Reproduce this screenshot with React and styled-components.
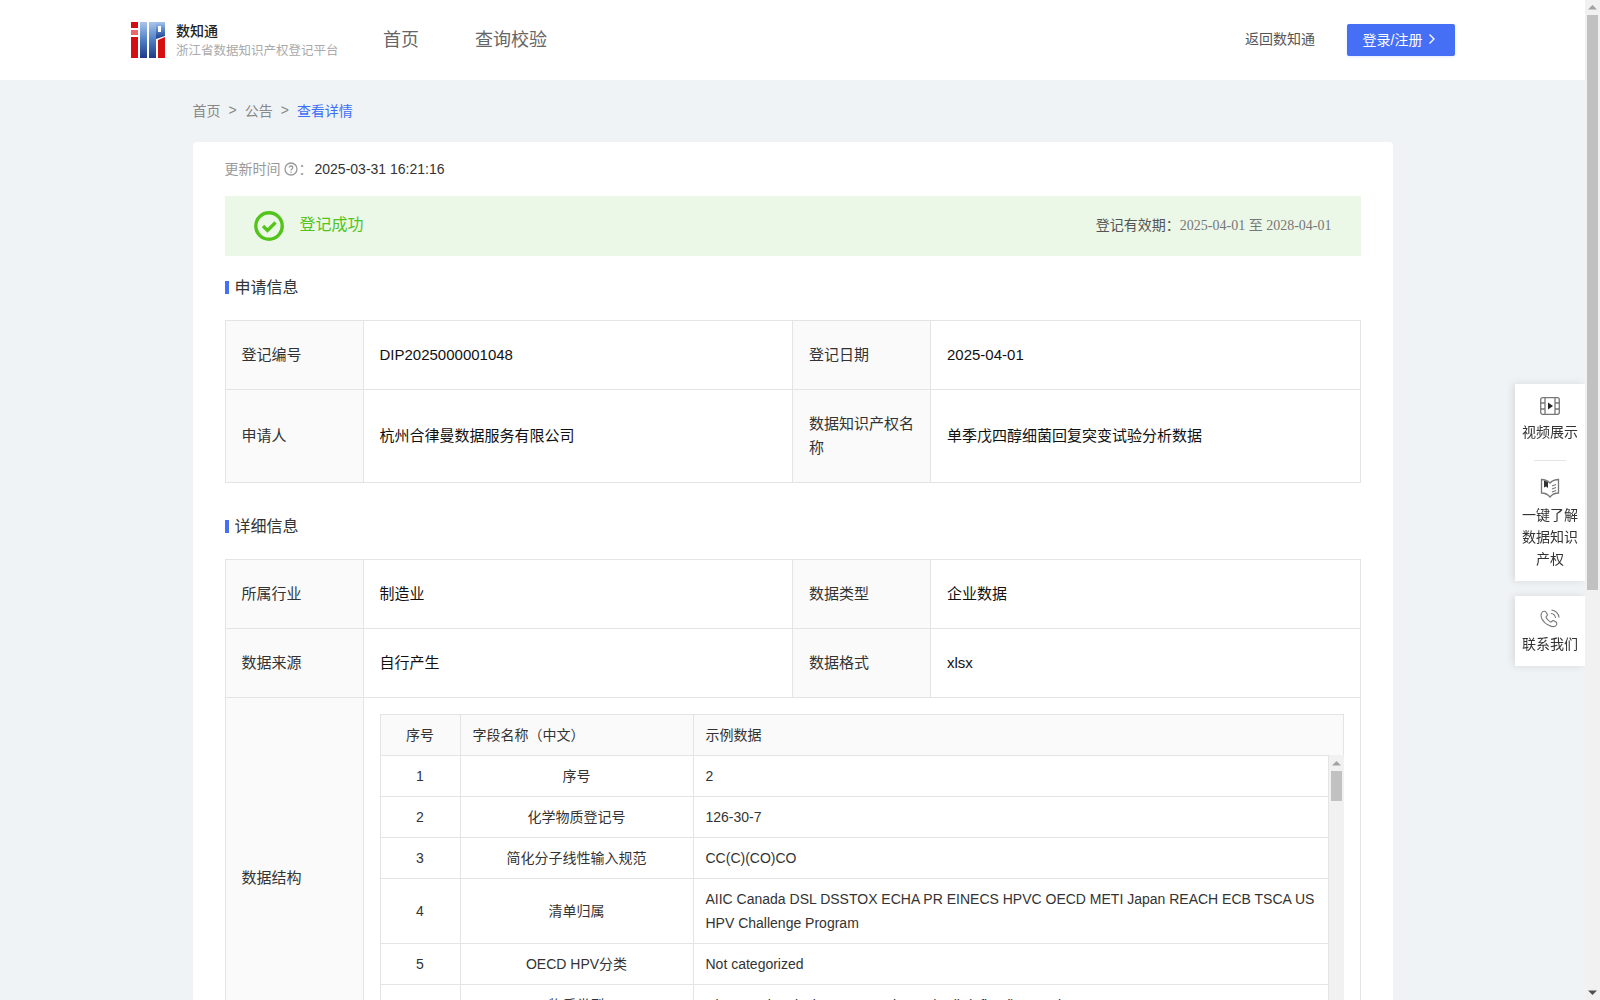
import React from 'react';
import styled, { createGlobalStyle } from 'styled-components';

const GlobalStyle = createGlobalStyle`
  html, body {
    margin: 0;
    padding: 0;
    background: #eff3f6;
    font-family: "Liberation Sans", "Noto Sans CJK SC", sans-serif;
    font-size: 14px;
    color: #333;
  }
  * { box-sizing: border-box; }
`;

const Page = styled.div`
  width: 1585px;
  min-height: 1687px;
`;

const Header = styled.header`
  height: 80px;
  background: #fff;
  display: flex;
  align-items: center;
  padding: 0 130px 0 131px;
`;

const Brand = styled.div`
  display: flex;
  align-items: center;
  gap: 11px;
  width: 252px;
`;

const BrandText = styled.div`
  display: flex;
  flex-direction: column;
  gap: 1px;
`;

const BrandName = styled.div`
  font-size: 14px;
  line-height: 20px;
  font-weight: 500;
  color: #222;
`;

const BrandSub = styled.div`
  font-size: 12.5px;
  line-height: 18px;
  color: #aaa;
  white-space: nowrap;
`;

const Nav = styled.nav`
  display: flex;
  gap: 56px;
  flex: 1;
  padding-bottom: 4px;
`;

const NavItem = styled.a`
  font-size: 18px;
  color: #666;
`;

const BackLink = styled.a`
  font-size: 14px;
  color: #555;
  margin-right: 32px;
  padding-bottom: 4px;
`;

const LoginButton = styled.button`
  width: 108px;
  height: 32px;
  border: 0;
  border-radius: 2px;
  background: #4570f6;
  color: #fff;
  font: inherit;
  font-size: 14px;
  display: flex;
  align-items: center;
  justify-content: center;
  gap: 6px;
  padding: 0 3px 3px 0;
  box-shadow: 0 1px 3px rgba(69, 112, 246, 0.15);
`;

const Main = styled.main`
  width: 1200px;
  margin: 0 auto;
`;

const Crumbs = styled.div`
  height: 62px;
  display: flex;
  align-items: center;
  gap: 8px;
  color: #888;
  font-size: 14px;
  padding-bottom: 3px;
`;

const CrumbCurrent = styled.span`
  color: #3b6ff5;
`;

const Card = styled.div`
  background: #fff;
  border-radius: 4px;
  padding: 16px 32px 32px;
`;

const UpdateRow = styled.div`
  display: flex;
  align-items: center;
  height: 22px;
  color: #999;
`;

const UpdateLabel = styled.span`
  padding-bottom: 3px;
`;

const HelpIcon = styled.svg`
  margin: 0 1px 0 3px;
`;

const UpdateValue = styled.span`
  color: #333;
  margin-left: 2px;
`;

const Alert = styled.div`
  height: 60px;
  margin-top: 16px;
  background: #ebf7e7;
  display: flex;
  align-items: center;
  padding: 0 29px 0 29px;
`;

const AlertTitle = styled.div`
  font-size: 16px;
  color: #52c41a;
  margin-left: 16px;
  flex: 1;
  padding-bottom: 6px;
`;

const AlertDates = styled.div`
  color: #555;
  padding-bottom: 5px;
`;

const DateText = styled.span`
  font-family: "Liberation Serif", "Noto Sans CJK SC", serif;
  color: #777;
`;

const SectionTitle = styled.h3`
  margin: ${({ $top }) => $top}px 0 ${({ $bottom }) => $bottom}px;
  height: 24px;
  display: flex;
  align-items: center;
  gap: 6px;
  font-size: 16px;
  font-weight: 400;
  color: #333;
  &::before {
    content: "";
    width: 4px;
    height: 13px;
    margin-top: 2px;
    background: #4570f6;
  }
`;

const InfoTable = styled.table`
  width: 1136px;
  border-collapse: collapse;
  table-layout: fixed;
  font-size: 15px;
  line-height: 24px;
`;

const Label = styled.th`
  width: 138px;
  padding: 22px 16px;
  border: 1px solid #e4e4e4;
  background: #fafafa;
  color: #333;
  font-weight: 400;
  text-align: left;
`;

const Value = styled.td`
  padding: 22px 16px;
  border: 1px solid #e4e4e4;
  color: #111;
`;

const NestedCell = styled.td`
  padding: 16px;
  border: 1px solid #e4e4e4;
`;

const FieldTable = styled.table`
  width: ${({ $width }) => $width}px;
  border-collapse: collapse;
  table-layout: fixed;
  font-size: 14px;
  line-height: 24px;
  color: #333;
`;

const FieldHead = styled.th`
  padding: 8px 12px;
  border: 1px solid #e4e4e4;
  background: #fafafa;
  font-weight: 400;
  text-align: ${({ $center }) => ($center ? 'center' : 'left')};
  width: ${({ $w }) => ($w ? `${$w}px` : 'auto')};
`;

const FieldCell = styled.td`
  padding: 8px 12px;
  border: 1px solid #e4e4e4;
  text-align: ${({ $center }) => ($center ? 'center' : 'left')};
  width: ${({ $w }) => ($w ? `${$w}px` : 'auto')};
`;

const ScrollBody = styled.div`
  height: 286px;
  width: 964px;
  margin-top: -1px;
  display: flex;
  overflow: hidden;
`;

const ScrollPane = styled.div`
  width: 949px;
  flex: none;
`;

const Rail = styled.div`
  width: 15px;
  height: 100%;
  flex: none;
  padding-top: ${({ $top }) => $top || 0}px;
  background: #f1f1f1;
  display: flex;
  flex-direction: column;
  align-items: center;
`;

const RailArrow = styled.svg`
  display: block;
  flex: none;
`;

const RailThumb = styled.div`
  width: 11px;
  flex: none;
  height: ${({ $h }) => $h}px;
  background: #c1c1c1;
`;

const RailGap = styled.div`
  flex: 1;
`;

const WindowBar = styled.div`
  position: fixed;
  top: 0;
  right: 0;
  bottom: 0;
`;

const SidePanel = styled.aside`
  position: fixed;
  right: 15px;
  top: 384px;
  width: 70px;
  display: flex;
  flex-direction: column;
  gap: 15px;
`;

const SideCard = styled.div`
  background: #fff;
  box-shadow: -2px 0 8px rgba(0, 0, 0, 0.1);
  padding: 13px 0 11px;
  display: flex;
  flex-direction: column;
  align-items: center;
`;

const SideItem = styled.div`
  text-align: center;
  font-size: 14px;
  line-height: 22px;
  color: #333;
  width: 56px;
`;

const SideIcon = styled.svg`
  display: block;
  margin: 0 auto ${({ $gap }) => $gap}px;
`;

const SideDivider = styled.div`
  width: 32px;
  height: 1px;
  background: #e4e4e4;
  margin: 17px 0 17px;
`;

const Logo = () => (
  <svg width="34" height="36" viewBox="0 0 34 36">
    <defs>
      <linearGradient id="logoBlue" x1="0" y1="0" x2="0" y2="1">
        <stop offset="0" stopColor="#a9c6ec" />
        <stop offset="0.5" stopColor="#4f7fc4" />
        <stop offset="1" stopColor="#1f3a8a" />
      </linearGradient>
    </defs>
    <rect x="0" y="0" width="7" height="6" fill="#d40f14" />
    <rect x="0" y="8" width="7" height="5" fill="#e8686b" />
    <rect x="0" y="15" width="7" height="21" fill="#d40f14" />
    <rect x="9" y="0" width="7" height="36" fill="url(#logoBlue)" />
    <rect x="18" y="0" width="7" height="36" fill="url(#logoBlue)" />
    <path d="M25 0H34V14L25 17Z" fill="url(#logoBlue)" />
    <rect x="27" y="4" width="3" height="6" fill="#fff" />
    <path d="M34 15V36H27V18Z" fill="#d40f14" />
  </svg>
);

const ArrowUp = () => (
  <RailArrow width="15" height="15" viewBox="0 0 15 15">
    <path d="M3 9.500 7.500 5 12 9.500z" fill="#a3a3a3" />
  </RailArrow>
);

const ArrowDown = () => (
  <RailArrow width="15" height="15" viewBox="0 0 15 15">
    <path d="M3 5.500 7.500 10 12 5.500z" fill="#505050" />
  </RailArrow>
);

const rows = [
  ['1', '序号', '2'],
  ['2', '化学物质登记号', '126-30-7'],
  ['3', '简化分子线性输入规范', 'CC(C)(CO)CO'],
  ['4', '清单归属', 'AIIC Canada DSL DSSTOX ECHA PR EINECS HPVC OECD METI Japan REACH ECB TSCA US HPV Challenge Program'],
  ['5', 'OECD HPV分类', 'Not categorized'],
  ['6', '物质类型', 'Discrete chemical Mono-constituent (well-defined) Organic'],
];

export default function App() {
  return (
    <Page>
      <GlobalStyle />
      <Header>
        <Brand>
          <Logo />
          <BrandText>
            <BrandName>数知通</BrandName>
            <BrandSub>浙江省数据知识产权登记平台</BrandSub>
          </BrandText>
        </Brand>
        <Nav>
          <NavItem>首页</NavItem>
          <NavItem>查询校验</NavItem>
        </Nav>
        <BackLink>返回数知通</BackLink>
        <LoginButton>
          登录/注册
          <svg width="8" height="12" viewBox="0 0 8 12" fill="none" stroke="#fff" strokeWidth="1.4">
            <path d="M1.500 1.500 6 6l-4.500 4.500" />
          </svg>
        </LoginButton>
      </Header>
      <Main>
        <Crumbs>
          <span>首页</span>
          <span>&gt;</span>
          <span>公告</span>
          <span>&gt;</span>
          <CrumbCurrent>查看详情</CrumbCurrent>
        </Crumbs>
        <Card>
          <UpdateRow>
            <UpdateLabel>更新时间</UpdateLabel>
            <HelpIcon width="14" height="14" viewBox="0 0 14 14" fill="none" stroke="#999" strokeWidth="1.3">
              <circle cx="7" cy="7" r="6" />
              <path d="M5.200 5.600C5.200 4.500 6 4 7 4s1.800.6 1.800 1.500C8.800 7 7 6.800 7 8.400" />
              <path d="M7 9.600v1.200" />
            </HelpIcon>
            <UpdateLabel>：</UpdateLabel>
            <UpdateValue>2025-03-31 16:21:16</UpdateValue>
          </UpdateRow>
          <Alert>
            <svg width="30" height="30" viewBox="0 0 30 30" fill="none" stroke="#52c41a">
              <circle cx="15" cy="15" r="13.200" strokeWidth="3.400" />
              <path d="M9 15l4.500 4.500L21.500 11.500" strokeWidth="3.200" />
            </svg>
            <AlertTitle>登记成功</AlertTitle>
            <AlertDates>
              登记有效期：<DateText>2025-04-01 至 2028-04-01</DateText>
            </AlertDates>
          </Alert>
          <SectionTitle $top={18} $bottom={22}>申请信息</SectionTitle>
          <InfoTable>
            <tbody>
              <tr>
                <Label>登记编号</Label>
                <Value>DIP2025000001048</Value>
                <Label>登记日期</Label>
                <Value>2025-04-01</Value>
              </tr>
              <tr>
                <Label>申请人</Label>
                <Value>杭州合律曼数据服务有限公司</Value>
                <Label>数据知识产权名称</Label>
                <Value>单季戊四醇细菌回复突变试验分析数据</Value>
              </tr>
            </tbody>
          </InfoTable>
          <SectionTitle $top={30} $bottom={22}>详细信息</SectionTitle>
          <InfoTable>
            <tbody>
              <tr>
                <Label>所属行业</Label>
                <Value>制造业</Value>
                <Label>数据类型</Label>
                <Value>企业数据</Value>
              </tr>
              <tr>
                <Label>数据来源</Label>
                <Value>自行产生</Value>
                <Label>数据格式</Label>
                <Value>xlsx</Value>
              </tr>
              <tr>
                <Label>数据结构</Label>
                <NestedCell colSpan={3}>
                  <FieldTable $width={964}>
                    <thead>
                      <tr>
                        <FieldHead $center $w={80}>序号</FieldHead>
                        <FieldHead $w={233}>字段名称（中文）</FieldHead>
                        <FieldHead>示例数据</FieldHead>
                      </tr>
                    </thead>
                  </FieldTable>
                  <ScrollBody>
                    <ScrollPane>
                      <FieldTable $width={949}>
                        <tbody>
                          {rows.map((row) => (
                            <tr key={row[0]}>
                              <FieldCell $center $w={80}>{row[0]}</FieldCell>
                              <FieldCell $center $w={233}>{row[1]}</FieldCell>
                              <FieldCell>{row[2]}</FieldCell>
                            </tr>
                          ))}
                        </tbody>
                      </FieldTable>
                    </ScrollPane>
                    <Rail $top={1}>
                      <ArrowUp />
                      <RailThumb $h={30} />
                      <RailGap />
                      <ArrowDown />
                    </Rail>
                  </ScrollBody>
                </NestedCell>
              </tr>
            </tbody>
          </InfoTable>
        </Card>
      </Main>
      <SidePanel>
        <SideCard>
          <SideItem>
            <SideIcon $gap={6} width="20" height="18" viewBox="0 0 20 18" fill="none" stroke="#777" strokeWidth="1.300">
              <rect x="0.7" y="0.7" width="18.600" height="16.600" rx="2" />
              <path d="M5 1v16M15 1v16M1 6h4M1 12h4M15 6h4M15 12h4" />
              <path d="M8 5.500l5 3.500-5 3.500z" fill="#222" stroke="none" />
            </SideIcon>
            视频展示
          </SideItem>
          <SideDivider />
          <SideItem>
            <SideIcon $gap={6} width="20" height="20" viewBox="0 0 20 20" fill="none" stroke="#777" strokeWidth="1.300">
              <path d="M1.500 1.500C4 1.500 8 3 10 5c2-2 6-3.500 8.500-3.500V15c-2.500 0-6.500 1.500-8.500 4-2-2.500-6-4-8.500-4z" />
              <path d="M12 8l4-1.500M12 11l4-1.500M12 14l4-1.500" />
              <path d="M4 2.500l4 1.500v6l-2-1.500-2 1z" fill="#333" stroke="none" />
            </SideIcon>
            一键了解数据知识产权
          </SideItem>
        </SideCard>
        <SideCard>
          <SideItem>
            <SideIcon $gap={4} width="20" height="20" viewBox="0 0 20 20" fill="none" stroke="#777" strokeWidth="1.100">
              <path d="M2 3.500C3 2 5 1.800 6 3l1.200 2.200c.4.8 0 1.600-.8 2.200-.4.3-.5.7-.3 1.100.9 1.900 2.400 3.400 4.400 4.400.4.2.8.1 1.100-.3.6-.8 1.400-1.200 2.200-.8l2.200 1.200c1.200 1 1 3-.5 4-1.800 1.100-4 .7-6.200-.5C5.500 15 3.500 12.800 2 10 .8 7.500.8 5 2 3.500z" />
              <path d="M11 4.500c2.300.2 4.300 2.200 4.500 4.500M11.500 1c4 .3 7.200 3.500 7.500 7.500" />
            </SideIcon>
            联系我们
          </SideItem>
        </SideCard>
      </SidePanel>
      <WindowBar>
        <Rail>
          <ArrowUp />
          <RailThumb $h={575} />
          <RailGap />
          <ArrowDown />
        </Rail>
      </WindowBar>
    </Page>
  );
}
